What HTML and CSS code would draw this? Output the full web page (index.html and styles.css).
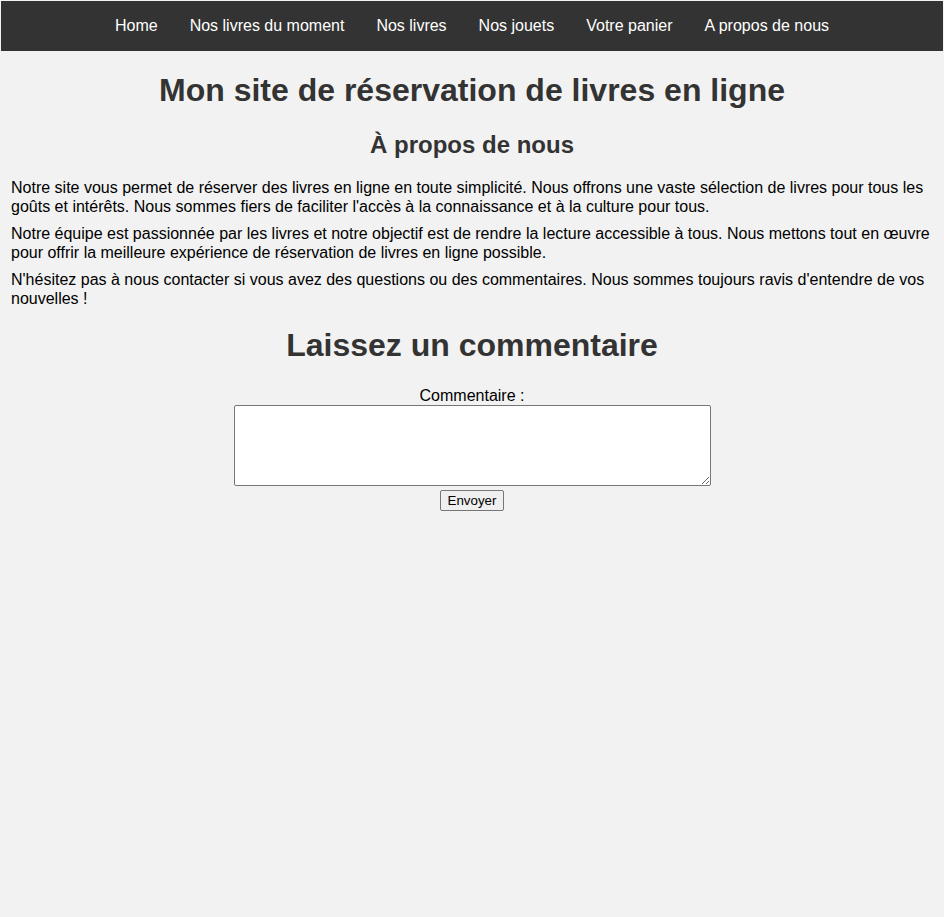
FILE: index.html
```html
<!DOCTYPE html>
<html lang="fr">
<head>
<meta charset="utf-8">
<title>Mon site de réservation de livres en ligne</title>
<link rel="stylesheet" href="styles.css">
</head>
<body>
<nav class="topnav">
  <a href="#">Home</a>
  <a href="#">Nos livres du moment</a>
  <a href="#">Nos livres</a>
  <a href="#">Nos jouets</a>
  <a href="#">Votre panier</a>
  <a href="#">A propos de nous</a>
</nav>
<main class="content">
  <h1 class="title">Mon site de réservation de livres en ligne</h1>
  <h2 class="subtitle">À propos de nous</h2>
  <p class="text">Notre site vous permet de réserver des livres en ligne en toute simplicité. Nous offrons une vaste sélection de livres pour tous les goûts et intérêts. Nous sommes fiers de faciliter l'accès à la connaissance et à la culture pour tous.</p>
  <p class="text">Notre équipe est passionnée par les livres et notre objectif est de rendre la lecture accessible à tous. Nous mettons tout en œuvre pour offrir la meilleure expérience de réservation de livres en ligne possible.</p>
  <p class="text">N'hésitez pas à nous contacter si vous avez des questions ou des commentaires. Nous sommes toujours ravis d'entendre de vos nouvelles !</p>
  <h1 class="title title-form">Laissez un commentaire</h1>
  <form class="comment-form">
    <label class="comment-label" for="comment">Commentaire :</label>
    <textarea class="comment-input" id="comment" name="comment"></textarea>
    <button class="comment-submit" type="submit">Envoyer</button>
  </form>
</main>
</body>
</html>
```
FILE: styles.css
```css
html, body {
  margin: 0;
  background: #f2f2f2;
}
body {
  padding: 1px;
  font-family: "Liberation Sans", Arial, sans-serif;
  font-size: 16px;
  color: #000;
}
.topnav {
  background: #333;
  display: flex;
  justify-content: center;
}
.topnav a {
  color: #fff;
  text-decoration: none;
  padding: 15px 16px 16px;
  line-height: 19px;
  font-size: 16px;
}
.content {
  padding: 0 10px;
}
.title {
  font-size: 32px;
  color: #333;
  text-align: center;
  margin: 21.44px 0;
}
.title-form {
  margin: 19.5px 0 22.5px;
}
.subtitle {
  font-size: 24px;
  color: #333;
  text-align: center;
  margin: 20.9px 0 18.9px;
}
.text {
  margin: 8px 0;
  line-height: 19px;
}
.comment-form {
  display: flex;
  flex-direction: column;
  align-items: center;
}
.comment-label {
  line-height: 18px;
}
.comment-input {
  box-sizing: border-box;
  width: 477px;
  height: 81px;
  margin: 0;
  border: 1px solid #767676;
  border-radius: 2px;
  background: #fff;
}
.comment-submit {
  margin-top: 4px;
  font-family: "Liberation Sans", Arial, sans-serif;
  font-size: 13.33px;
  padding: 2px 7px;
  border: 1px solid #767676;
  border-radius: 2px;
  background: #efefef;
  color: #000;
}
```
